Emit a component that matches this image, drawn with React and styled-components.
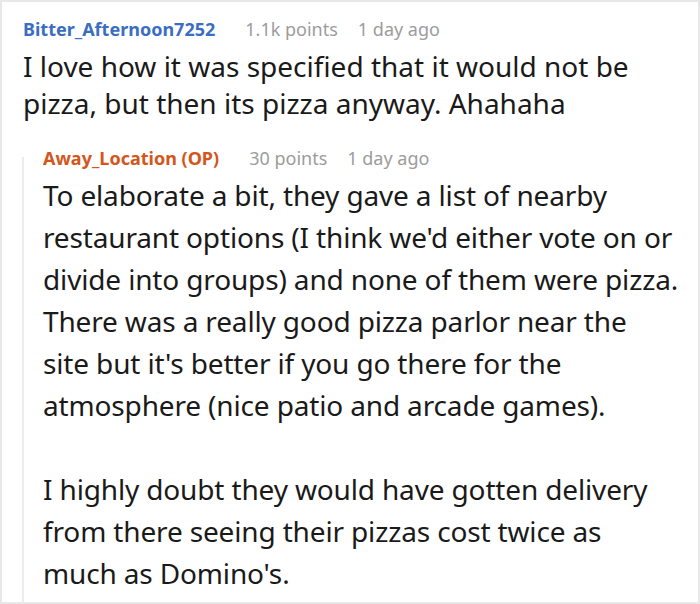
import React from 'react';
import styled, { createGlobalStyle } from 'styled-components';

const GlobalStyle = createGlobalStyle`
  html, body {
    margin: 0;
    padding: 0;
    background: #ffffff;
  }
  * {
    box-sizing: border-box;
  }
`;

const Frame = styled.div`
  width: 700px;
  height: 604px;
  overflow: hidden;
  border: 2px solid #e8e8e8;
  background: #fff;
  padding: 15px 0 0 21px;
  font-family: 'Noto Sans', 'Open Sans', sans-serif;
  color: #1a1a1a;
`;

const Comment = styled.div`
  display: flex;
  flex-direction: column;
`;

const Meta = styled.div`
  display: flex;
  align-items: baseline;
  gap: 20px;
  font-size: 18px;
  line-height: 24px;
  color: #9c9c9c;
`;

const Author = styled.span`
  font-weight: 700;
  color: ${(p) => (p.$op ? '#d4561b' : '#3b6ec2')};
  margin-right: 10px;
`;

const Body = styled.p`
  margin: ${(p) => (p.$reply ? '4px' : '7px')} 0 0;
  width: ${(p) => (p.$reply ? '652px' : '640px')};
  font-size: 28px;
  letter-spacing: ${(p) => (p.$reply ? '-0.15px' : '0')};
  line-height: ${(p) => (p.$reply ? '42px' : '37px')};
  color: #1a1a1a;
  white-space: pre-line;
`;

const Replies = styled.div`
  position: relative;
  margin: 24px 0 0 -1px;
  padding-left: 21px;

  &::before {
    content: '';
    position: absolute;
    left: 0;
    top: 11px;
    bottom: -40px;
    width: 2px;
    background: #ececec;
  }
`;

const replyText = `To elaborate a bit, they gave a list of nearby
restaurant options (I think we'd either vote on or
divide into groups) and none of them were pizza.
There was a really good pizza parlor near the
site but it's better if you go there for the
atmosphere (nice patio and arcade games).

I highly doubt they would have gotten delivery
from there seeing their pizzas cost twice as
much as Domino's.`;

export default function App() {
  return (
    <>
      <GlobalStyle />
      <Frame>
        <Comment>
          <Meta>
            <Author>Bitter_Afternoon7252</Author>
            <span>1.1k points</span>
            <span>1 day ago</span>
          </Meta>
          <Body>
            I love how it was specified that it would not be pizza, but then its
            pizza anyway. Ahahaha
          </Body>
          <Replies>
            <Comment>
              <Meta>
                <Author $op>Away_Location (OP)</Author>
                <span>30 points</span>
                <span>1 day ago</span>
              </Meta>
              <Body $reply>{replyText}</Body>
            </Comment>
          </Replies>
        </Comment>
      </Frame>
    </>
  );
}
